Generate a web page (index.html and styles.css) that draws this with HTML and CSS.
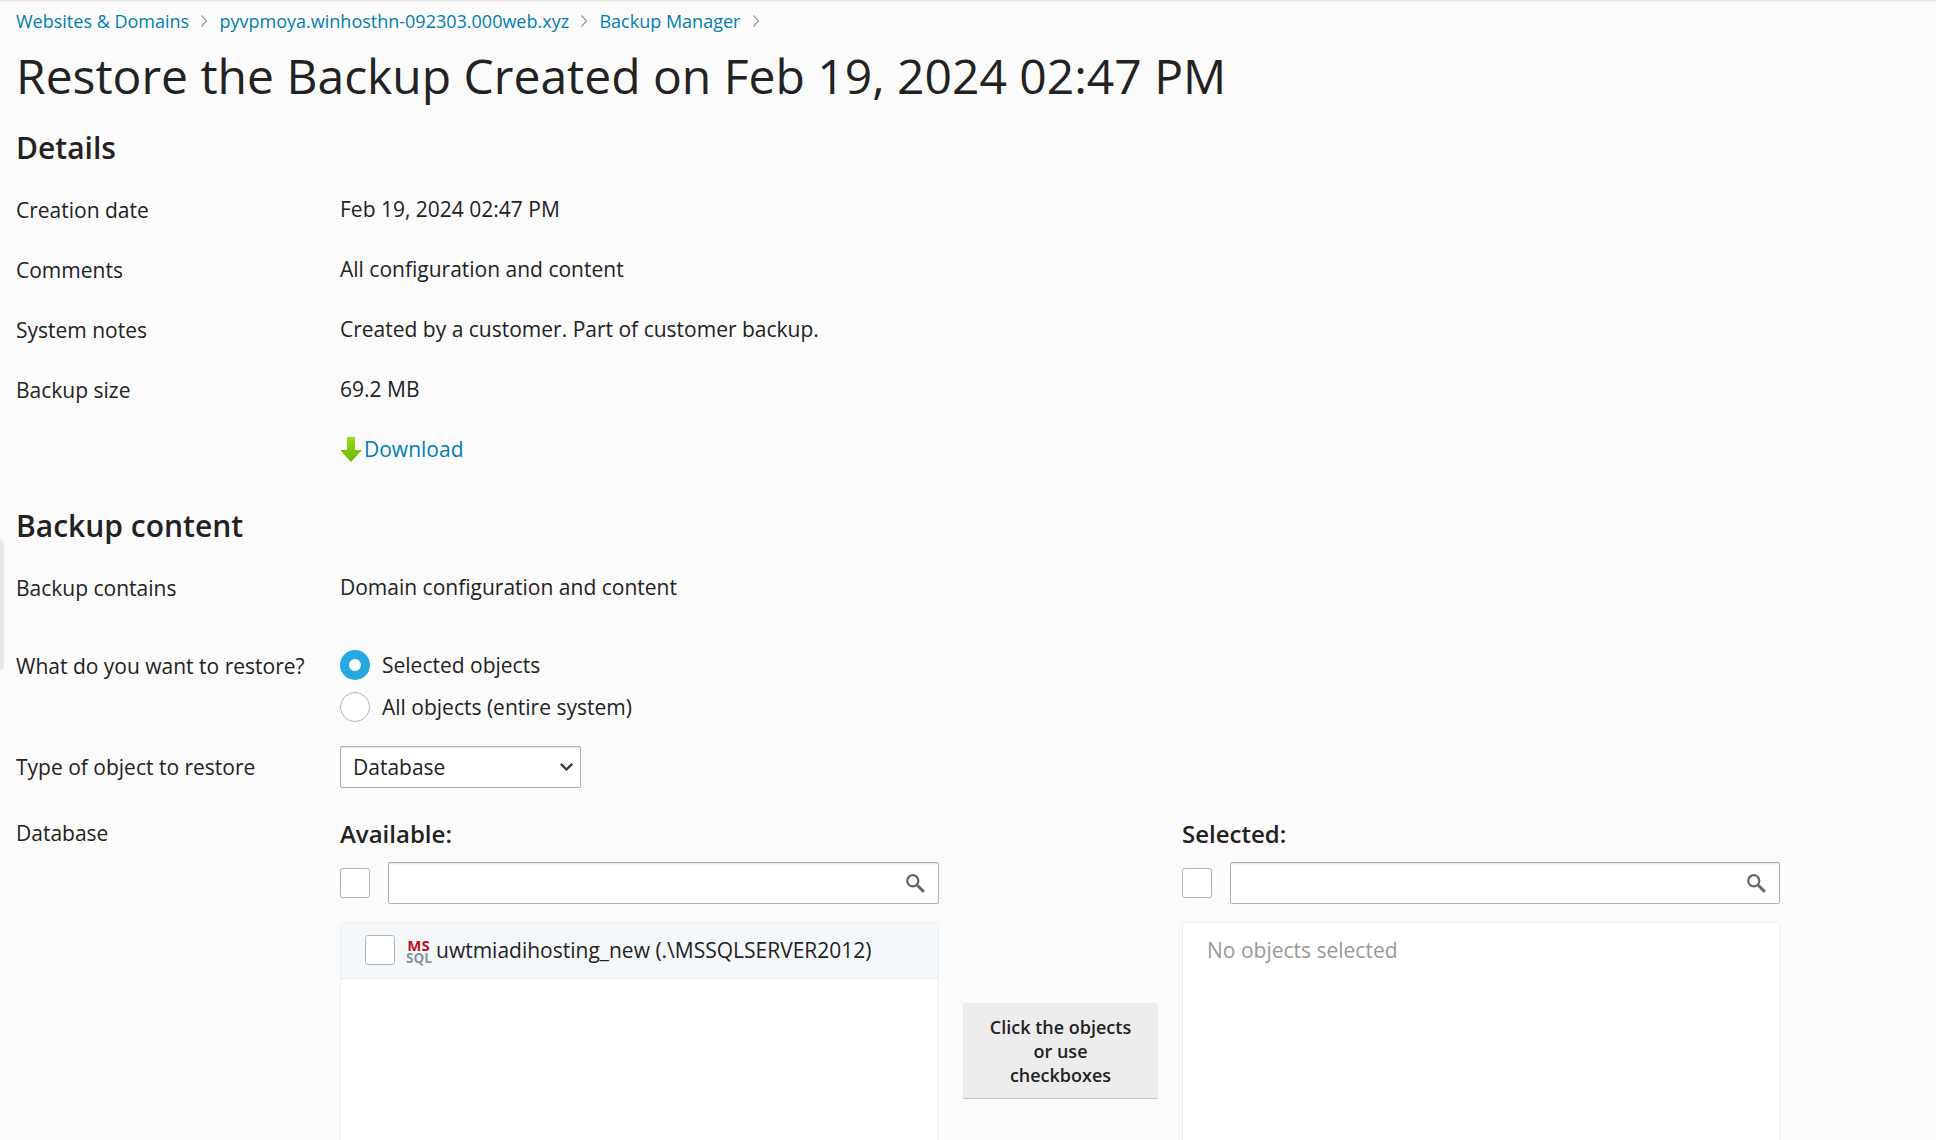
FILE: index.html
```html
<!DOCTYPE html>
<html lang="en">
<head>
<meta charset="utf-8">
<title>Restore the Backup</title>
<link rel="stylesheet" href="styles.css">
</head>
<body>
<div class="edge-tab"></div>
<main class="page">
  <nav class="crumbs">
    <a href="#">Websites &amp; Domains</a>
    <svg class="chev" viewBox="0 0 8 14"><path d="M1.5 1.5 6.5 7l-5 5.5"/></svg>
    <a href="#">pyvpmoya.winhosthn-092303.000web.xyz</a>
    <svg class="chev" viewBox="0 0 8 14"><path d="M1.5 1.5 6.5 7l-5 5.5"/></svg>
    <a href="#">Backup Manager</a>
    <svg class="chev" viewBox="0 0 8 14"><path d="M1.5 1.5 6.5 7l-5 5.5"/></svg>
  </nav>
  <h1>Restore the Backup Created on Feb 19, 2024 02:47 PM</h1>

  <h2 class="h-details">Details</h2>
  <div class="row"><div class="lbl">Creation date</div><div class="val">Feb 19, 2024 02:47 PM</div></div>
  <div class="row"><div class="lbl">Comments</div><div class="val">All configuration and content</div></div>
  <div class="row"><div class="lbl">System notes</div><div class="val">Created by a customer. Part of customer backup.</div></div>
  <div class="row"><div class="lbl">Backup size</div><div class="val">69.2 MB</div></div>
  <div class="row"><div class="lbl"></div><div class="val">
    <a class="dl" href="#"><svg class="dl-ico" viewBox="0 0 22 25"><defs><linearGradient id="g" x1="0" y1="0" x2="0" y2="1"><stop offset="0" stop-color="#9ad81a"/><stop offset="1" stop-color="#6cb404"/></linearGradient></defs><path fill="url(#g)" d="M7 0h8v13h7L11 25 0 13h7z"/></svg>Download</a>
  </div></div>

  <h2 class="h-content">Backup content</h2>
  <div class="row"><div class="lbl">Backup contains</div><div class="val">Domain configuration and content</div></div>
  <div class="row row-radio">
    <div class="lbl">What do you want to restore?</div>
    <div class="radios">
      <div class="radio-line"><span class="radio on"></span>Selected objects</div>
      <div class="radio-line"><span class="radio"></span>All objects (entire system)</div>
    </div>
  </div>
  <div class="row row-select">
    <div class="lbl">Type of object to restore</div>
    <div class="select">Database<svg class="caret" viewBox="0 0 12 8"><path d="M1.5 1.5 6 6l4.5-4.5"/></svg></div>
  </div>
  <div class="row row-db">
    <div class="lbl lbl-db">Database</div>
    <div class="picker">
      <section class="col">
        <div class="col-title">Available:</div>
        <div class="tools">
          <span class="check"></span>
          <div class="search"><svg class="mag" viewBox="0 0 18 18"><circle cx="7" cy="7" r="5"/><path d="m11 11 6 6"/></svg></div>
        </div>
        <div class="list">
          <div class="item">
            <span class="check"></span>
            <span class="mssql"><span class="ms">MS</span><span class="sql">SQL</span></span>
            <span>uwtmiadihosting_new (.\MSSQLSERVER2012)</span>
          </div>
        </div>
      </section>
      <div class="mid"><div class="hint">Click the objects or use checkboxes</div></div>
      <section class="col col-last">
        <div class="col-title">Selected:</div>
        <div class="tools">
          <span class="check"></span>
          <div class="search"><svg class="mag" viewBox="0 0 18 18"><circle cx="7" cy="7" r="5"/><path d="m11 11 6 6"/></svg></div>
        </div>
        <div class="list"><div class="empty">No objects selected</div></div>
      </section>
    </div>
  </div>
</main>
</body>
</html>
```
FILE: styles.css
```css
* { box-sizing: border-box; }
html, body { margin: 0; height: 1140px; overflow: hidden; }
body {
  background: #fbfbfb;
  color: #222;
  font-family: "Open Sans", sans-serif;
  font-size: 21px;
  line-height: 30px;
  box-shadow: inset 0 2px 2px -1px #ddd;
}
a { color: #007eb0; text-decoration: none; }
.edge-tab {
  position: absolute; left: 0; top: 540px; width: 4px; height: 130px;
  background: #e8e8e8; border-radius: 0 4px 4px 0;
}
.page { padding: 6px 16px 0; }
.crumbs { display: flex; align-items: center; height: 30px; font-size: 18px; }
.chev { width: 8px; height: 14px; margin: 0 11.2px; flex: none; }
.chev path { fill: none; stroke: #999; stroke-width: 1.2; }
h1 { margin: 8px 0 0; font-size: 48px; line-height: 64px; font-weight: 400; }
h2 { margin: 0; font-size: 30px; line-height: 40px; font-weight: 600; }
.h-details { margin-top: 20px; margin-bottom: 26px; }
.h-content { margin-top: 12px; margin-bottom: 26px; }
.row { display: flex; height: 60px; }
.lbl { width: 324px; flex: none; padding-top: 1px; white-space: nowrap; }
.dl { display: inline-flex; align-items: center; }
.dl-ico { width: 22px; height: 25px; margin-right: 2px; }
.row-radio { height: 114px; padding-top: 18px; }
.radios { display: flex; flex-direction: column; gap: 12px; }
.radio-line { display: flex; align-items: center; height: 30px; }
.radio {
  width: 30px; height: 30px; border-radius: 50%; margin-right: 12px; flex: none;
  border: 1px solid #b5b5b5; background: #fff;
}
.radio.on { border: 9.5px solid #28a8e0; }
.row-select { height: 73px; align-items: flex-start; }
.row-select .lbl { padding-top: 6px; }
.select {
  width: 241px; height: 42px; padding-left: 12px; display: flex; align-items: center;
  justify-content: space-between; background: #fff; border: 1px solid #b0b0b0;
  border-radius: 2px; box-shadow: inset 0 3px 2px -2px #ddd;
}
.caret { width: 15px; height: 10px; margin-right: 6px; }
.caret path { fill: none; stroke: #333; stroke-width: 1.8; }
.row-db { height: auto; }
.lbl-db { padding-top: 0; line-height: 28px; }
.picker { display: flex; align-items: flex-start; }
.col { width: 599px; flex: none; }
.col-last { width: 598px; }
.col-title { font-weight: 600; font-size: 24px; line-height: 30px; margin-bottom: 13px; }
.tools { display: flex; align-items: center; gap: 18px; height: 42px; }
.check {
  width: 30px; height: 30px; flex: none; background: #fff;
  border: 1px solid #b5b5b5; border-radius: 3px;
}
.search {
  flex: 1; height: 42px; position: relative; background: #fff;
  border: 1px solid #b0b0b0; border-radius: 2px; box-shadow: inset 0 3px 2px -2px #ddd;
}
.mag { position: absolute; right: 13px; top: 10px; width: 20px; height: 20px; }
.mag circle { fill: none; stroke: #666; stroke-width: 2; }
.mag path { fill: none; stroke: #666; stroke-width: 2.6; }
.list {
  margin-top: 18px; height: 400px; background: #fff;
  border: 1px solid #eee; border-radius: 2px;
}
.item {
  display: flex; align-items: center; height: 56px; padding: 0 0 1px 24px;
  background: #f5f8fb; border-bottom: 1px solid #eaeaea;
}
.mssql {
  display: flex; flex-direction: column; width: 25px; margin: 0 5px 0 11px; padding-top: 3px;
  font-weight: 700; line-height: 13px; text-align: center; white-space: nowrap;
}
.ms { color: #b8141c; font-size: 15px; }
.sql { color: #8a9499; font-size: 13.5px; }
.empty { padding: 12px 24px; color: #999; }
.mid { width: 243px; flex: none; padding: 184px 24px 0; }
.hint {
  width: 195px; height: 96px; padding: 12px 22px 0; background: #ededed;
  border-bottom: 1px solid #c4c4c4; border-radius: 2px;
  font-size: 18px; line-height: 24px; font-weight: 600; text-align: center;
}
```
